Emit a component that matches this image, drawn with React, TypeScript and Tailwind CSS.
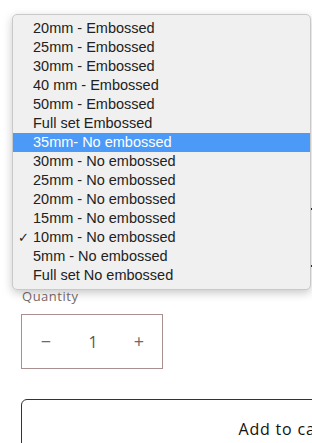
import React from "react";

const OPTIONS = [
  "20mm - Embossed",
  "25mm - Embossed",
  "30mm - Embossed",
  "40 mm - Embossed",
  "50mm - Embossed",
  "Full set Embossed",
  "35mm- No embossed",
  "30mm - No embossed",
  "25mm - No embossed",
  "20mm - No embossed",
  "15mm - No embossed",
  "10mm - No embossed",
  "5mm - No embossed",
  "Full set No embossed",
];

const HIGHLIGHTED = 6;
const SELECTED = 11;

export default function App() {
  return (
    <div className="relative w-[312px] h-[443px] overflow-hidden bg-white">
      {/* page behind the open select */}
      <div className="pl-[21px] pt-[287px]" style={{ fontFamily: '"Open Sans", "Liberation Sans", sans-serif' }}>
        <div className="text-[13px] tracking-[0.04em] text-[#7b6a6a] leading-[18px] pl-[1px]">Quantity</div>
        <div className="mt-[9px] flex items-center w-[142px] h-[55px] border border-[#a89090] text-[#6a6a6a]">
          <div className="w-[48px] flex justify-center text-[18px]">−</div>
          <div className="flex-1 flex justify-center text-[16px] text-[#555]">1</div>
          <div className="w-[46px] flex justify-center text-[18px]">+</div>
        </div>
        <div className="mt-[30px] w-[526px] h-[60px] rounded-[6px] border border-[#333] flex items-center justify-center text-[16px] tracking-[0.05em] text-[#121212]">
          Add to cart
        </div>
      </div>

      {/* little edges of the page peeking out at the right */}
      <div className="absolute left-[310px] top-[208px] w-[2px] h-[2px] bg-[#333]" />
      <div className="absolute left-[310px] top-[265px] w-[2px] h-[2px] bg-[#333]" />

      {/* native dropdown menu */}
      <div
        className="absolute left-[12px] top-[14px] w-[299px] rounded-[5px] bg-[#f0f0f0] border border-[#c9c9c9] shadow-[0_3px_10px_rgba(0,0,0,0.22)] py-[4px]"
        style={{ fontFamily: '"Liberation Sans", Arial, sans-serif' }}
      >
        {OPTIONS.map((opt, i) => (
          <div
            key={opt}
            className={
              i === HIGHLIGHTED
                ? "relative h-[19px] flex items-center pl-[20px] text-[14.5px] bg-[#4c9af7] text-white"
                : "relative h-[19px] flex items-center pl-[20px] text-[14.5px] text-[#222]"
            }
          >
            {i === SELECTED && <span className="absolute left-[5px] text-[13px] text-[#222]">✓</span>}
            {opt}
          </div>
        ))}
      </div>
    </div>
  );
}
